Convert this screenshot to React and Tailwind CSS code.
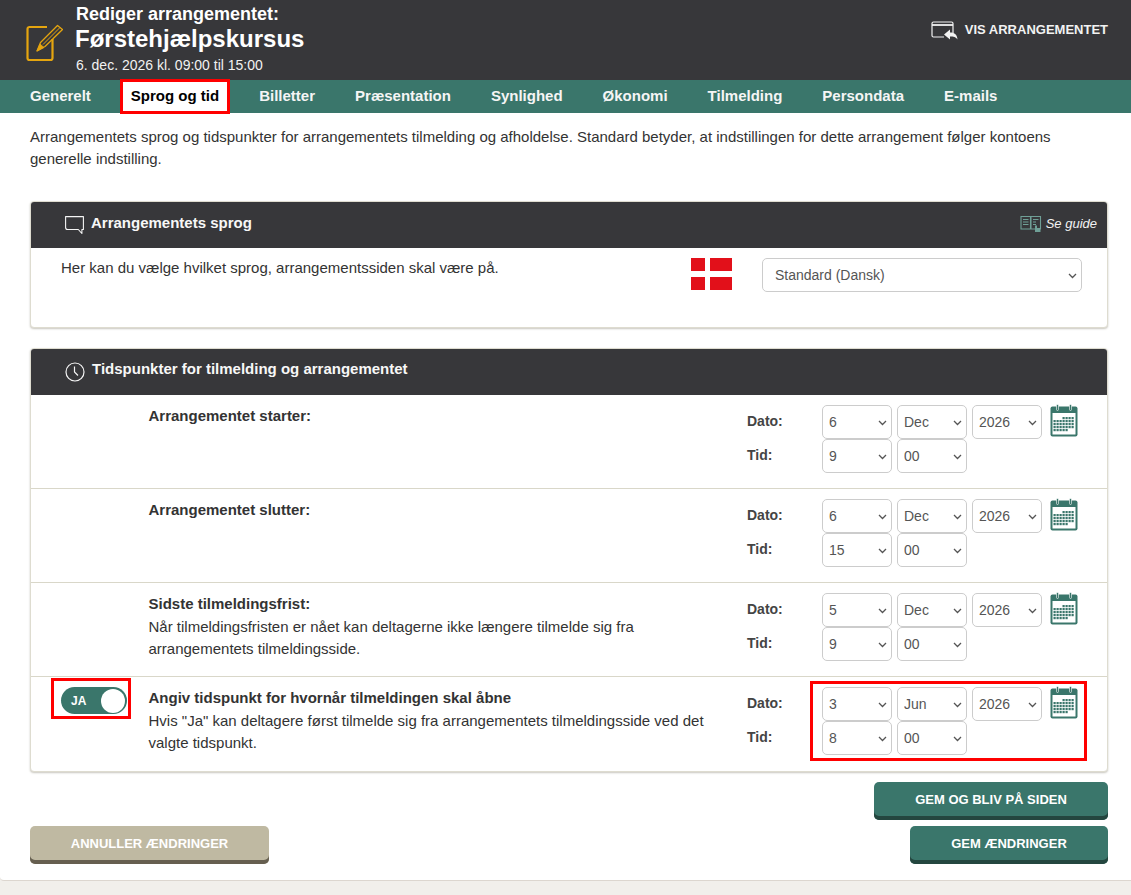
const tabs = ['Generelt', 'Sprog og tid', 'Billetter', 'Præsentation', 'Synlighed', 'Økonomi', 'Tilmelding', 'Persondata', 'E-mails']
const months = ['Jan', 'Feb', 'Mar', 'Apr', 'Maj', 'Jun', 'Jul', 'Aug', 'Sep', 'Okt', 'Nov', 'Dec']
const days = Array.from({ length: 31 }, (_, i) => String(i + 1))
const hours = Array.from({ length: 24 }, (_, i) => String(i))
const mins = ['00', '15', '30', '45']

const rows = [
  { title: 'Arrangementet starter:', d: '6', m: 'Dec', h: '9' },
  { title: 'Arrangementet slutter:', d: '6', m: 'Dec', h: '15' },
  { title: 'Sidste tilmeldingsfrist:', desc: 'Når tilmeldingsfristen er nået kan deltagerne ikke længere tilmelde sig fra arrangementets tilmeldingsside.', d: '5', m: 'Dec', h: '9' },
  { title: 'Angiv tidspunkt for hvornår tilmeldingen skal åbne', desc: 'Hvis "Ja" kan deltagere først tilmelde sig fra arrangementets tilmeldingsside ved det valgte tidspunkt.', d: '3', m: 'Jun', h: '8', toggle: true, marked: true },
]

function EditIcon() {
  return (
    <svg width="38" height="38" viewBox="0 0 38 38" fill="none" stroke="#e5a50f" className="shrink-0">
      <path d="M22 3H4.500a2 2 0 0 0-2 2v29a2 2 0 0 0 2 2h21a2 2 0 0 0 2-2V15" strokeWidth="2.200" />
      <path d="M12 27 15.500 18.500 32.500 1.500 37.500 5.500 20 22.500Z" strokeWidth="1.300" strokeLinejoin="round" />
      <path d="M18 20.500 35 3.500" strokeWidth="1" />
      <path d="M12 27 15 20 19 23.500Z" fill="#e5a50f" strokeWidth="0.800" />
    </svg>
  )
}

function ShowIcon() {
  return (
    <svg width="28" height="22" viewBox="0 0 28 22" fill="none" stroke="#f2f2f2" className="shrink-0">
      <path d="M22 13V3.500a1.500 1.500 0 0 0-1.500-1.500H2.500A1.500 1.500 0 0 0 1 3.500v12A1.500 1.500 0 0 0 2.500 17H13" strokeWidth="1.200" />
      <path d="M1 5h21" strokeWidth="1.800" />
      <path d="M19 9.500v3c4 0 7 1.500 7.500 7-1.500-2.500-4-3-7.500-3v3l-6-5Z" fill="#f2f2f2" stroke="none" />
    </svg>
  )
}

function BubbleIcon() {
  return (
    <svg width="19" height="18" viewBox="0 0 19 18" fill="none" stroke="#f5f5f5" strokeWidth="1.100" className="shrink-0 mt-[14px]">
      <path d="M.6.600h17.800v12.900h-1.500v4l-3.600-4H2.600a2 2 0 0 1-2-2Z" strokeLinejoin="round" />
    </svg>
  )
}

function ClockIcon() {
  return (
    <svg width="20" height="20" viewBox="0 0 20 20" fill="none" stroke="#f5f5f5" strokeWidth="1.200" className="shrink-0 mt-[13px]">
      <circle cx="10" cy="10" r="9" />
      <path d="M9.500 4.500V10l3.500 3.500" />
    </svg>
  )
}

function GuideIcon() {
  return (
    <svg width="22" height="18" viewBox="0 0 22 18" fill="none" stroke="#6f9f96" strokeWidth="1.100" className="shrink-0">
      <path d="M1 1.500h9.500V14H1ZM11 1.500h9.500V14H11Z" />
      <path d="M3 4.500h5.500M3 7h5.500M3 9.500h5.500M13 4.500h5.500M13 7h3M13 9.500h3" />
      <path d="M15 10.500h2v2.500h3.500V17H15Z" fill="#6f9f96" stroke="none" />
    </svg>
  )
}

function CalendarIcon() {
  return (
    <svg width="28" height="33" viewBox="0 0 28 33" className="shrink-0 mt-[-1px]">
      <rect x="0.500" y="2.500" width="27" height="30" rx="2" fill="#3a766b" />
      <rect x="2.500" y="9" width="23" height="21.500" fill="#fff" />
      <rect x="6.500" y="0.500" width="2" height="6" rx="1" fill="#3a766b" stroke="#fff" strokeWidth="0.600" />
      <rect x="19.500" y="0.500" width="2" height="6" rx="1" fill="#3a766b" stroke="#fff" strokeWidth="0.600" />
      <g fill="#3a766b">
        {[13, 16, 19, 22, 25].map((y, r) =>
          [3.500, 6.500, 9.500, 12.500, 15.500, 18.500, 21.500].map((x, c) =>
            (r === 0 && c < 3) || (r === 4 && c > 4) ? null : <rect key={`${r}-${c}`} x={x} y={y} width="2.200" height="2.200" />
          )
        )}
      </g>
    </svg>
  )
}

function Flag() {
  return (
    <svg width="41" height="32" viewBox="0 0 41 32" className="shrink-0">
      <rect width="41" height="32" fill="#e2101a" />
      <rect x="14" width="5" height="32" fill="#fff" />
      <rect y="13" width="41" height="6" fill="#fff" />
    </svg>
  )
}

function Select({ value, options, className, pad = 'pl-1.5' }) {
  return (
    <div className={`relative h-[34px] shrink-0 ${className}`}>
      <select defaultValue={value} className={`appearance-none w-full h-full bg-white border border-[#ccc] rounded-[5px] ${pad} text-[14px] text-[#555]`}>
        {options.map((o) => <option key={o}>{o}</option>)}
      </select>
      <svg width="9" height="6" viewBox="0 0 9 6" fill="none" stroke="#555" strokeWidth="1.300" className="absolute right-[5px] top-[15px] pointer-events-none">
        <path d="M1 1l3.500 3.500L8 1" />
      </svg>
    </div>
  )
}

function Card({ icon, title, titleClass, right, children, className }) {
  return (
    <section className={`border border-[#dedcd0] rounded-[4px] bg-white shadow-[0_1px_2px_rgba(120,115,95,0.4)] overflow-hidden ${className}`}>
      <div className="h-[46px] bg-[#37373a] flex items-start justify-between pl-[34px] pr-[10px]">
        <div className="flex items-start gap-[7px]">
          {icon}
          <h2 className={`font-bold text-[15px] leading-[22px] text-[#f7f7f7] ${titleClass}`}>{title}</h2>
        </div>
        {right}
      </div>
      {children}
    </section>
  )
}

function DateRow({ r }) {
  return (
    <div className="flex border-b border-[#d9d7c9] last:border-b-0 h-[94px]">
      <div className="w-[117.500px] shrink-0 pl-[30px] pt-[10px]">
        {r.toggle && (
          <div className="relative w-[66px] h-[27px] rounded-full bg-[#3a766b] flex items-center pl-[10px]">
            <span className="text-[12px] font-bold text-white">JA</span>
            <span className="absolute right-[2px] top-[1.500px] w-6 h-6 rounded-full bg-white" />
            <div className="absolute left-[-10px] top-[-9px] w-[80px] h-[41px] border-[3px] border-[#f00]" />
          </div>
        )}
      </div>
      <div className="w-[570.500px] shrink-0 pt-[10px] text-[15px] leading-[22.500px] text-[#333]">
        <strong className="block">{r.title}</strong>
        {r.desc && <p>{r.desc}</p>}
      </div>
      <div className="pl-[28px] pt-[10px] relative flex-1">
        {r.marked && <div className="absolute left-[91px] top-[4px] w-[277px] h-[80px] border-[3px] border-[#f00] pointer-events-none" />}
        <div className="flex items-start">
          <b className="w-[75px] text-[14px] leading-[32px] text-[#444]">Dato:</b>
          <Select value={r.d} options={days} className="w-[70px]" />
          <Select value={r.m} options={months} className="w-[70px] ml-[5px]" />
          <Select value="2026" options={['2025', '2026', '2027']} className="w-[70px] ml-[5px]" />
          <span className="ml-[8px]"><CalendarIcon /></span>
        </div>
        <div className="flex items-start">
          <b className="w-[75px] text-[14px] leading-[32px] text-[#444]">Tid:</b>
          <Select value={r.h} options={hours} className="w-[70px]" />
          <Select value="00" options={mins} className="w-[70px] ml-[5px]" />
        </div>
      </div>
    </div>
  )
}

function Btn({ children, className }) {
  return (
    <button className={`h-[38px] rounded-[5px] text-white font-bold text-[13px] leading-[36px] pb-[2px] text-center ${className}`}>{children}</button>
  )
}

export default function App() {
  return (
    <div className="min-h-[895px] bg-[#f1efeb] font-['Liberation_Sans',Arial,sans-serif]">
      <div className="bg-white border-b border-[#dcd6cf] rounded-bl-[4px] h-[881px]">
        <header className="h-[80px] bg-[#37373a] flex justify-between">
          <div className="flex">
            <div className="pl-[25px] pt-[24px] w-[75px]"><EditIcon /></div>
            <div className="text-white">
              <div className="font-bold text-[18px] leading-[20px] pl-[1px] pt-[4px]">Rediger arrangementet:</div>
              <h1 className="font-bold text-[24px] leading-[30px]">Førstehjælpskursus</h1>
              <div className="text-[14px] leading-[20px] pl-[1px] pt-[1px] text-[#f2f2f2]">6. dec. 2026 kl. 09:00 til 15:00</div>
            </div>
          </div>
          <a className="flex items-start gap-[6px] pt-[20px] pr-[23px] text-[13px] font-bold text-[#f2f2f2]">
            <ShowIcon />
            <span className="leading-[20px]">VIS ARRANGEMENTET</span>
          </a>
        </header>

        <nav className="h-[33px] bg-[#3a766b] flex pl-[10px]">
          {tabs.map((t) => (
            <a key={t} className={`mx-[10px] px-[10px] h-[33px] text-[15px] font-bold leading-[32px] ${t === 'Sprog og tid' ? 'bg-white text-black outline-[3px] outline-[#f00] -outline-offset-[2px]' : 'text-[#f5f5f5]'}`}>{t}</a>
          ))}
        </nav>

        <div className="pl-[30px] pr-[23px]">
          <p className="text-[15px] leading-[22px] text-[#333] pt-[13px]">
            Arrangementets sprog og tidspunkter for arrangementets tilmelding og afholdelse. Standard betyder, at indstillingen for dette arrangement følger kontoens generelle indstilling.
          </p>

          <Card
            className="mt-[31px]"
            icon={<BubbleIcon />}
            title="Arrangementets sprog"
            titleClass="mt-[10px]"
            right={
              <div className="flex items-center gap-[4px] pt-[12px] text-[13px] italic text-[#f2f2f2]">
                <GuideIcon />
                <span>Se guide</span>
              </div>
            }
          >
            <div className="h-[79px] flex items-start pl-[30px] pt-[10px]">
              <p className="w-[630px] text-[15px] leading-[20px] text-[#333] shrink-0">Her kan du vælge hvilket sprog, arrangementssiden skal være på.</p>
              <Flag />
              <Select value="Standard (Dansk)" options={['Standard (Dansk)', 'Dansk', 'English']} pad="pl-3" className="ml-[30px] w-[320px]" />
            </div>
          </Card>

          <Card className="mt-[20px]" icon={<ClockIcon />} title="Tidspunkter for tilmelding og arrangementet" titleClass="mt-[9px]">
            {rows.map((r) => <DateRow key={r.title} r={r} />)}
          </Card>

          <div className="flex justify-end mt-[10px]">
            <Btn className="w-[234px] bg-[#3a766b] shadow-[inset_0_-4px_0_#24463f]">GEM OG BLIV PÅ SIDEN</Btn>
          </div>
          <div className="flex justify-between mt-[6px]">
            <Btn className="w-[239px] bg-[#bfb9a2] shadow-[inset_0_-4px_0_#665f50]">ANNULLER ÆNDRINGER</Btn>
            <Btn className="w-[198px] bg-[#3a766b] shadow-[inset_0_-4px_0_#24463f]">GEM ÆNDRINGER</Btn>
          </div>
        </div>
      </div>
    </div>
  )
}
